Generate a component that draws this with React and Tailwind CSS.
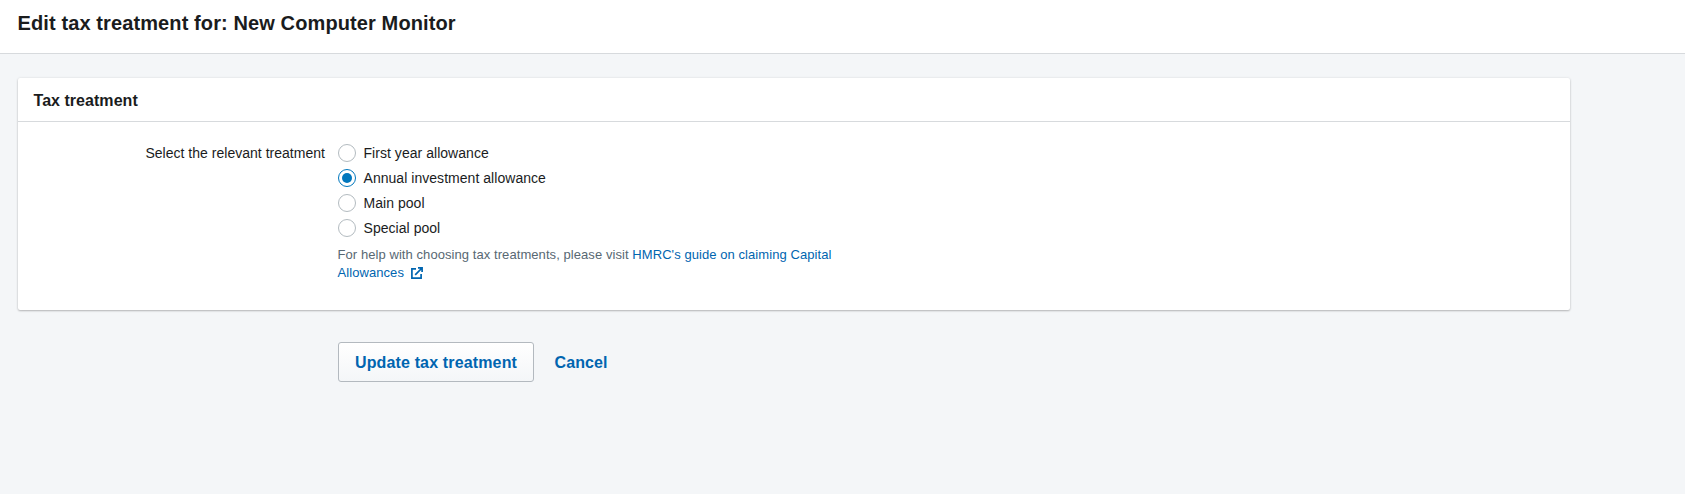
const treatments = ['First year allowance', 'Annual investment allowance', 'Main pool', 'Special pool'];

function Radio({ label, checked }) {
  return (
    <label className="flex h-[25px] items-center gap-[7.5px]">
      <input type="radio" name="treatment" defaultChecked={checked} className="peer sr-only" />
      <span className="flex size-[18px] items-center justify-center rounded-full border border-[#b3bbc0] bg-white peer-checked:border-[#0077bd]">
        {checked && <span className="size-[10px] rounded-full bg-[#0077bd]" />}
      </span>
      <span className="whitespace-nowrap text-[14px] leading-5 tracking-[0.04px]">{label}</span>
    </label>
  );
}

function ExternalIcon() {
  return (
    <svg className="ml-[7px] inline-block size-3 align-[-2px]" viewBox="0 0 12 12" fill="none" stroke="currentColor" strokeWidth="1.7">
      <path d="M5 1.9H.9v9.2h9.2V7" />
      <path d="M7 .9h4.1V5M11 1 4.2 7.8" />
    </svg>
  );
}

export default function App() {
  return (
    <div className="min-h-screen bg-[#f4f6f8] font-['Liberation_Sans',Arial,sans-serif] text-[#1a1c1d]">
      <header className="h-[54px] border-b border-[#d7dadd] bg-white pl-[17.5px] pt-[11px]">
        <h1 className="whitespace-nowrap text-[20px] font-bold leading-6 tracking-[0.11px]">Edit tax treatment for: New Computer Monitor</h1>
      </header>
      <main className="pl-[18px] pt-6">
        <section className="h-[232px] w-[1552px] rounded-[2px] bg-white shadow-[0_0_3px_rgba(0,0,0,0.08),0_1px_2px_rgba(0,0,0,0.24)]">
          <div className="h-11 border-b border-[#d7dadd] pl-[15.5px] pt-[13px]">
            <h2 className="text-[16px] font-bold leading-5 tracking-[0.04px]">Tax treatment</h2>
          </div>
          <div className="flex pt-[18px]">
            <div className="w-[307px] whitespace-nowrap pt-px text-right text-[14px] leading-[25px] tracking-[0.02px]">Select the relevant treatment</div>
            <div className="ml-[13px] w-[510px]">
              {treatments.map((name) => (
                <Radio key={name} label={name} checked={name === 'Annual investment allowance'} />
              ))}
              <p className="-ml-[0.5px] mt-1.5 text-[13px] leading-[18px] tracking-[0.07px] text-[#586873]">
                For help with choosing tax treatments, please visit{' '}
                <a href="#guide" className="text-[#0065b0]">
                  HMRC's guide on claiming Capital<br />Allowances<ExternalIcon />
                </a>
              </p>
            </div>
          </div>
        </section>
        <div className="ml-80 mt-8 flex items-center">
          <button className="h-10 w-[196px] whitespace-nowrap rounded-[3px] border border-[#b3b9bf] bg-linear-to-b from-white to-[#f4f6f8] pt-0.5 text-[16px] font-bold tracking-[0.15px] text-[#0065b0]">
            Update tax treatment
          </button>
          <a href="#cancel" className="ml-[20.5px] pt-0.5 text-[16px] font-bold tracking-[0.1px] text-[#0065b0]">Cancel</a>
        </div>
      </main>
    </div>
  );
}
